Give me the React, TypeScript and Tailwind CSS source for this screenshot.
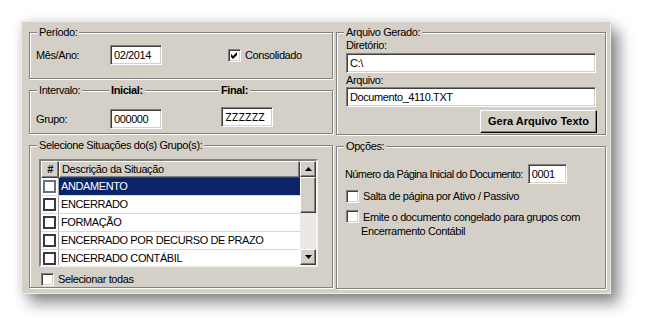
import type { ReactNode } from "react";

const sunken =
  "border border-t-[#808080] border-l-[#808080] border-b-white border-r-white shadow-[inset_1px_1px_0_#404040,inset_-1px_-1px_0_#d4d0c8]";
const raised =
  "border border-t-white border-l-white border-b-[#404040] border-r-[#404040] shadow-[inset_-1px_-1px_0_#808080]";

function Check({ checked }: { checked?: boolean }) {
  return (
    <span className={`w-[13px] h-[13px] shrink-0 bg-white flex items-center justify-center ${sunken}`}>
      {checked && (
        <svg width="7" height="7" viewBox="0 0 7 7">
          <path d="M0 2 L2 4 L6 0 L6 3 L2 7 L0 5 Z" fill="#000" />
        </svg>
      )}
    </span>
  );
}

function Field({ value, className = "" }: { value: string; className?: string }) {
  return (
    <div className={`h-[20px] bg-white pl-[3px] flex items-center shrink-0 ${sunken} ${className}`}>
      {value}
    </div>
  );
}

function Group({
  label,
  className = "",
  children,
}: {
  label?: string;
  className?: string;
  children: ReactNode;
}) {
  return (
    <div className={`relative border border-[#808080] shadow-[inset_1px_1px_0_#fff,1px_1px_0_#fff] ${className}`}>
      {label && (
        <span className="absolute -top-[7px] left-[7px] bg-[#d4d0c8] px-[2px] leading-[13px]">{label}</span>
      )}
      {children}
    </div>
  );
}

const rows = [
  "ANDAMENTO",
  "ENCERRADO",
  "FORMAÇÃO",
  "ENCERRADO POR DECURSO DE PRAZO",
  "ENCERRADO CONTÁBIL",
];

function GridBox() {
  return (
    <div className="w-[279px] h-[108px] flex border-2 border-t-[#808080] border-l-[#808080] border-b-[#f4f3f0] border-r-[#f4f3f0] bg-white overflow-hidden">
      <div className="flex-1 flex flex-col">
        <div className="h-[17px] flex shrink-0 bg-[#d4d0c8]">
          <div className={`w-[18px] flex items-center justify-center font-bold ${raised}`}>#</div>
          <div className={`flex-1 flex items-center pl-[2px] ${raised}`}>Descrição da Situação</div>
        </div>
        {rows.map((r, i) => (
          <div key={r} className="h-[18px] flex shrink-0 border-b border-[#d8d8d8]">
            <div className="w-[18px] flex items-center justify-center border-r border-[#a0a0a0] bg-white">
              <span
                className={`w-[13px] h-[13px] bg-white border-2 ${i === 0 ? "border-[#6a6f86]" : "border-[#3a3a3a]"}`}
              />
            </div>
            <div
              className={`flex-1 flex items-center pl-[2px] ${i === 0 ? "bg-[#0a246a] text-white" : ""}`}
            >
              {r}
            </div>
          </div>
        ))}
      </div>
      <div className="w-[16px] flex flex-col bg-[#ebe9e5] shrink-0">
        <div className={`h-[16px] bg-[#d4d0c8] flex items-center justify-center ${raised}`}>
          <svg width="7" height="4" viewBox="0 0 7 4">
            <path d="M3.5 0 L7 4 L0 4 Z" fill="#000" />
          </svg>
        </div>
        <div className={`h-[36px] bg-[#d4d0c8] ${raised}`} />
        <div className="flex-1" />
        <div className={`h-[16px] bg-[#d4d0c8] flex items-center justify-center ${raised}`}>
          <svg width="7" height="4" viewBox="0 0 7 4">
            <path d="M0 0 L7 0 L3.5 4 Z" fill="#000" />
          </svg>
        </div>
      </div>
    </div>
  );
}

export default function App() {
  return (
    <div className="w-[652px] h-[336px] bg-white pt-[21px] pl-[21px] font-[family-name:'Liberation_Sans',Arial,sans-serif] text-[11px] leading-[13px] tracking-[-0.4px] text-black">
      <div className="w-[590px] h-[273px] bg-[#d4d0c8] border border-[#ecebe6] shadow-[8px_9px_14px_rgba(0,0,0,0.45),0_0_8px_rgba(0,0,0,0.12)] flex pl-[7px] pt-[10px] gap-[3px]">
        {/* left column */}
        <div className="w-[304px] flex flex-col gap-[11px]">
          <Group label="Período:" className="h-[47px]">
            <div className="flex items-center pt-[12px] pl-[6px]">
              <span className="w-[74px]">Mês/Ano:</span>
              <Field value="02/2014" className="w-[52px]" />
              <span className="ml-[66px]">
                <Check checked />
              </span>
              <span className="ml-[4px]">Consolidado</span>
            </div>
          </Group>

          <Group className="h-[44px]">
            <span className="absolute -top-[7px] left-[7px] bg-[#d4d0c8] px-[2px]">Intervalo:</span>
            <span className="absolute -top-[7px] left-[79px] bg-[#d4d0c8] px-[2px] font-bold">Inicial:</span>
            <span className="absolute -top-[7px] left-[189px] bg-[#d4d0c8] px-[2px] font-bold">Final:</span>
            <div className="flex items-center pt-[16px] pl-[6px]">
              <span className="w-[74px]">Grupo:</span>
              <Field value="000000" className="w-[52px]" />
              <Field
                value="ZZZZZZ"
                className="w-[52px] ml-[59px] mb-[4px] font-[family-name:'DejaVu_Sans_Mono',monospace] tracking-normal text-[11px]"
              />
            </div>
          </Group>

          <Group label="Selecione Situações do(s) Grupo(s):" className="h-[143px]">
            <div className="pt-[13px] pl-[9px] flex flex-col">
              <GridBox />
              <div className="flex items-center mt-[6px] ml-[2px] gap-[4px]">
                <Check />
                <span>Selecionar todas</span>
              </div>
            </div>
          </Group>
        </div>

        {/* right column */}
        <div className="w-[270px] flex flex-col gap-[11px]">
          <Group label="Arquivo Gerado:" className="h-[103px]">
            <div className="flex flex-col pt-[6px] pl-[9px] pr-[9px]">
              <span className="h-[13px]">Diretório:</span>
              <Field value="C:\" className="mt-[1px]" />
              <span className="h-[13px] mt-[1px]">Arquivo:</span>
              <Field value="Documento_4110.TXT" />
              <button
                className={`self-end -mr-[1px] mt-[3px] w-[117px] h-[23px] bg-[#d4d0c8] font-bold tracking-normal flex items-center justify-center ${raised} border-r-black border-b-black`}
              >
                Gera Arquivo Texto
              </button>
            </div>
          </Group>

          <Group label="Opções:" className="h-[143px]">
            <div className="flex flex-col pt-[17px] pl-[8px]">
              <div className="flex items-center">
                <span className="whitespace-nowrap tracking-[-0.6px]">Número da Página Inicial do Documento:</span>
                <Field value="0001" className="w-[39px] ml-[5px]" />
              </div>
              <div className="flex items-center mt-[6px] ml-[1px] gap-[4px]">
                <Check />
                <span>Salta de página por Ativo / Passivo</span>
              </div>
              <div className="flex items-start mt-[7px] ml-[1px] gap-[4px]">
                <Check />
                <div className="flex flex-col leading-[14px]">
                  <span>Emite o documento congelado para grupos com</span>
                  <span className="-ml-[2px]">Encerramento Contábil</span>
                </div>
              </div>
            </div>
          </Group>
        </div>
      </div>
    </div>
  );
}
